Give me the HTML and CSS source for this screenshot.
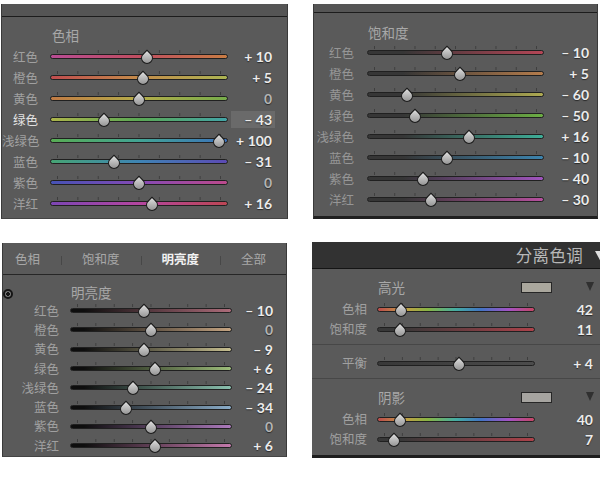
FILE: index.html
```html
<!DOCTYPE html>
<html lang="zh">
<head>
<meta charset="utf-8">
<title>HSL</title>
<link rel="stylesheet" href="styles.css">
</head>
<body>
<div class="page">

  <section class="panel p1">
    <div class="strip"></div>
    <div class="body">
      <div class="title">色相</div>
      <div class="rows">
        <div class="row"><span class="lab">红色</span><div class="track h-red"><b class="knob" style="--p:.55"></b></div><span class="val">+ 10</span></div>
        <div class="row"><span class="lab">橙色</span><div class="track h-orange"><b class="knob" style="--p:.525"></b></div><span class="val">+ 5</span></div>
        <div class="row"><span class="lab">黄色</span><div class="track h-yellow"><b class="knob" style="--p:.5"></b></div><span class="val zero">0</span></div>
        <div class="row active"><span class="lab">绿色</span><div class="track h-green"><b class="knob" style="--p:.285"></b></div><span class="val">– 43</span></div>
        <div class="row"><span class="lab">浅绿色</span><div class="track h-aqua"><b class="knob" style="--p:.985"></b></div><span class="val">+ 100</span></div>
        <div class="row"><span class="lab">蓝色</span><div class="track h-blue"><b class="knob" style="--p:.345"></b></div><span class="val">– 31</span></div>
        <div class="row"><span class="lab">紫色</span><div class="track h-purple"><b class="knob" style="--p:.5"></b></div><span class="val zero">0</span></div>
        <div class="row"><span class="lab">洋红</span><div class="track h-magenta"><b class="knob" style="--p:.58"></b></div><span class="val">+ 16</span></div>
      </div>
    </div>
  </section>

  <section class="panel p2">
    <div class="strip"></div>
    <div class="body">
      <div class="title">饱和度</div>
      <div class="rows">
        <div class="row"><span class="lab">红色</span><div class="track s-red"><b class="knob" style="--p:.45"></b></div><span class="val">– 10</span></div>
        <div class="row"><span class="lab">橙色</span><div class="track s-orange"><b class="knob" style="--p:.525"></b></div><span class="val">+ 5</span></div>
        <div class="row"><span class="lab">黄色</span><div class="track s-yellow"><b class="knob" style="--p:.2"></b></div><span class="val">– 60</span></div>
        <div class="row"><span class="lab">绿色</span><div class="track s-green"><b class="knob" style="--p:.25"></b></div><span class="val">– 50</span></div>
        <div class="row"><span class="lab">浅绿色</span><div class="track s-aqua"><b class="knob" style="--p:.58"></b></div><span class="val">+ 16</span></div>
        <div class="row"><span class="lab">蓝色</span><div class="track s-blue"><b class="knob" style="--p:.45"></b></div><span class="val">– 10</span></div>
        <div class="row"><span class="lab">紫色</span><div class="track s-purple"><b class="knob" style="--p:.3"></b></div><span class="val">– 40</span></div>
        <div class="row"><span class="lab">洋红</span><div class="track s-magenta"><b class="knob" style="--p:.35"></b></div><span class="val">– 30</span></div>
      </div>
    </div>
  </section>

  <section class="panel p3">
    <div class="tabs">
      <span class="tab">色相</span><i class="sep"></i>
      <span class="tab">饱和度</span><i class="sep"></i>
      <span class="tab on">明亮度</span><i class="sep"></i>
      <span class="tab">全部</span>
    </div>
    <div class="body">
      <div class="title-row"><span class="target"></span><span class="title">明亮度</span></div>
      <div class="rows">
        <div class="row"><span class="lab">红色</span><div class="track l-red"><b class="knob" style="--p:.45"></b></div><span class="val">– 10</span></div>
        <div class="row"><span class="lab">橙色</span><div class="track l-orange"><b class="knob" style="--p:.5"></b></div><span class="val zero">0</span></div>
        <div class="row"><span class="lab">黄色</span><div class="track l-yellow"><b class="knob" style="--p:.455"></b></div><span class="val">– 9</span></div>
        <div class="row"><span class="lab">绿色</span><div class="track l-green"><b class="knob" style="--p:.53"></b></div><span class="val">+ 6</span></div>
        <div class="row"><span class="lab">浅绿色</span><div class="track l-aqua"><b class="knob" style="--p:.38"></b></div><span class="val">– 24</span></div>
        <div class="row"><span class="lab">蓝色</span><div class="track l-blue"><b class="knob" style="--p:.33"></b></div><span class="val">– 34</span></div>
        <div class="row"><span class="lab">紫色</span><div class="track l-purple"><b class="knob" style="--p:.5"></b></div><span class="val zero">0</span></div>
        <div class="row"><span class="lab">洋红</span><div class="track l-magenta"><b class="knob" style="--p:.53"></b></div><span class="val">+ 6</span></div>
      </div>
    </div>
  </section>

  <section class="panel p4">
    <div class="head"><span class="head-title">分离色调</span><i class="head-tri"></i></div>
    <div class="sec">
      <div class="sec-head"><span class="title">高光</span><span class="swatch sw-hi"></span><i class="mini-tri"></i></div>
      <div class="row"><span class="lab">色相</span><div class="track t-hue"><b class="knob" style="--p:.117"></b></div><span class="val">42</span></div>
      <div class="row"><span class="lab">饱和度</span><div class="track t-sat"><b class="knob" style="--p:.11"></b></div><span class="val">11</span></div>
    </div>
    <div class="sec bal">
      <div class="row"><span class="lab">平衡</span><div class="track t-bal"><b class="knob" style="--p:.52"></b></div><span class="val">+ 4</span></div>
    </div>
    <div class="sec last">
      <div class="sec-head"><span class="title">阴影</span><span class="swatch sw-lo"></span><i class="mini-tri"></i></div>
      <div class="row"><span class="lab">色相</span><div class="track t-hue"><b class="knob" style="--p:.111"></b></div><span class="val">40</span></div>
      <div class="row"><span class="lab">饱和度</span><div class="track t-sat"><b class="knob" style="--p:.07"></b></div><span class="val">7</span></div>
    </div>
  </section>

</div>
</body>
</html>
```
FILE: styles.css
```css
html, body {
  margin: 0;
  background: #ffffff;
}
body {
  font-family: "Noto Sans CJK SC", "Noto Sans", sans-serif;
  width: 600px;
  height: 490px;
  overflow: hidden;
}
.page {
  display: grid;
  grid-template-columns: 287px 288px;
  grid-template-rows: 215px 216px;
  column-gap: 24px;
  row-gap: 23px;
  padding: 4px 0 0 1px;
}

.panel {
  background: #5a5a5a;
  box-sizing: border-box;
  overflow: hidden;
  position: relative;
}
.strip {
  background: #555555;
  border-bottom: 1px solid #1c1c1c;
}

/* ---------- shared rows ---------- */
.title {
  color: #a8a8a8;
  font-size: 13.5px;
  line-height: 20px;
}
.row {
  display: grid;
  align-items: center;
  height: 21px;
}
.lab {
  text-align: right;
  color: #a0a0a0;
  font-size: 12.5px;
  line-height: 16px;
  white-space: nowrap;
}
.val {
  text-align: right;
  font-family: Lato, "Noto Sans", sans-serif;
  font-weight: 700;
  font-size: 14px;
  color: #ececec;
  text-shadow: 0 1px 1px rgba(0,0,0,.55);
  white-space: nowrap;
  padding-right: 3px;
  height: 17px;
  line-height: 17px;
}
.val.zero {
  color: #b4b4b4;
}

.track {
  position: relative;
  height: 5px;
  box-sizing: border-box;
  border: 1px solid #202020;
  border-radius: 3px;
}
.track::before {
  content: "";
  position: absolute;
  left: 6px;
  right: 6px;
  top: -5px;
  height: 3px;
  background: linear-gradient(90deg, #3e3e3e 0 1px, transparent 1px) 0 0 / calc((100% - 1px) / 8) 100% repeat-x;
}
.knob {
  position: absolute;
  box-sizing: border-box;
  width: 12px;
  height: 12px;
  left: calc(6px + (100% - 12px) * var(--p));
  top: -3px;
  margin-left: -6px;
  transform: rotate(45deg);
  border-radius: 0 50% 50% 50%;
  border: 1px solid #1a1a1a;
  background: linear-gradient(135deg, #dedede, #8a8a8a);
}

/* ---------- panel 1 : hue ---------- */
.p1 {
  border-left: 1px solid #3a3a3a;
  border-right: 1px solid #3a3a3a;
  border-bottom: 1px solid #444;
}
.p1 .strip { height: 12px; }
.p1 .body { padding-top: 8px; }
.p1 .title { padding-left: 50px; margin-bottom: 1px; }
.p1 .row { grid-template-columns: 36px 12px 178px 47px; }
.p1 .row .track { grid-column: 3; }
.p1 .row .val { grid-column: 4; margin-left: 3px; }
.p1 .row.active .lab { color: #e2e2e2; }
.p1 .row.active .val { background: #6a6a6a; }

.h-red     { background: linear-gradient(90deg, #b84c94, #c04e60 50%, #c87c44); }
.h-orange  { background: linear-gradient(90deg, #c04c4e, #c48c4a 50%, #acb452); }
.h-yellow  { background: linear-gradient(90deg, #c07a44, #b4ac4a 50%, #76ac4a); }
.h-green   { background: linear-gradient(90deg, #acb44a, #5aa854 50%, #42a4a6); }
.h-aqua    { background: linear-gradient(90deg, #58ac54, #42a494 50%, #3c72bc); }
.h-blue    { background: linear-gradient(90deg, #46a474, #3e84b4 50%, #5c4ab4); }
.h-purple  { background: linear-gradient(90deg, #4652b4, #844ab4 50%, #bc4a8c); }
.h-magenta { background: linear-gradient(90deg, #7c46b4, #b446a0 50%, #bc4654); }

/* ---------- panel 2 : saturation ---------- */
.p2 {
  margin-left: 1px;
  margin-right: 2px;
  height: 215px;
  border-left: 1px solid #3a3a3a;
  border-right: 1px solid #3a3a3a;
  border-bottom: 3px solid #202020;
}
.p2 .strip { height: 8px; }
.p2 .body { padding-top: 9px; }
.p2 .title { padding-left: 54px; }
.p2 .lab { color: #969696; }
.p2 .row { grid-template-columns: 40px 13px 177px 48px; }
.p2 .row .track { grid-column: 3; }
.p2 .row .val { grid-column: 4; }

.s-red     { background: linear-gradient(90deg, #363636 20%, #b44656); }
.s-orange  { background: linear-gradient(90deg, #363636 20%, #b47c4c); }
.s-yellow  { background: linear-gradient(90deg, #363636 20%, #aeaa52); }
.s-green   { background: linear-gradient(90deg, #363636 20%, #6cae44); }
.s-aqua    { background: linear-gradient(90deg, #363636 20%, #3eae98); }
.s-blue    { background: linear-gradient(90deg, #363636 20%, #3c84ae); }
.s-purple  { background: linear-gradient(90deg, #363636 20%, #a054be); }
.s-magenta { background: linear-gradient(90deg, #363636 20%, #b6509e); }

/* ---------- panel 3 : luminance ---------- */
.p3 {
  margin: 1px 1px 0 1px;
  height: 214px;
  border-left: 1px solid #3a3a3a;
  border-right: 1px solid #3a3a3a;
  border-bottom: 1px solid #444;
}
.tabs {
  display: flex;
  align-items: center;
  height: 31px;
  padding-left: 12px;
  border-bottom: 1px solid #262626;
  font-size: 12.5px;
  color: #a8a8a8;
}
.tab { line-height: 16px; }
.tab.on { color: #f2f2f2; font-weight: 700; }
.sep {
  width: 1px;
  height: 9px;
  margin: 3px 20px 0 21px;
  background: #474747;
}
.p3 .body { padding-top: 9px; }
.title-row {
  display: flex;
  align-items: center;
  height: 17px;
}
.target {
  box-sizing: border-box;
  width: 10px;
  height: 10px;
  margin-top: 2px;
  border-radius: 50%;
  border: 2px solid #151515;
  background: radial-gradient(circle, #151515 0 1.6px, #7a7a7a 2px);
}
.p3 .title { margin-left: 58px; line-height: 17px; }
.p3 .row { height: 19.3px; grid-template-columns: 56px 11px 162px 44px; }
.p3 .row .track { grid-column: 3; }
.p3 .row .val { grid-column: 4; }

.l-red     { background: linear-gradient(90deg, #0e0e0e 8%, #ac6c7a); }
.l-orange  { background: linear-gradient(90deg, #0e0e0e 8%, #c4a482); }
.l-yellow  { background: linear-gradient(90deg, #0e0e0e 8%, #c6be90); }
.l-green   { background: linear-gradient(90deg, #0e0e0e 8%, #9cbc7a); }
.l-aqua    { background: linear-gradient(90deg, #0e0e0e 8%, #8ac0ae); }
.l-blue    { background: linear-gradient(90deg, #0e0e0e 8%, #8aacc8); }
.l-purple  { background: linear-gradient(90deg, #0e0e0e 8%, #ac7abc); }
.l-magenta { background: linear-gradient(90deg, #0e0e0e 8%, #c47aac); }

/* ---------- panel 4 : split toning ---------- */
.p4 {
  height: 216px;
  border-bottom: 3px solid #1e1e1e;
}
.head {
  height: 26px;
  background: #323232;
  border-bottom: 1px solid #141414;
  display: flex;
  align-items: center;
  justify-content: flex-end;
}
.head-title {
  color: #b8b8b8;
  font-size: 16.5px;
  line-height: 22px;
  letter-spacing: 0.3px;
}
.head-tri {
  width: 0;
  height: 0;
  margin-left: 12px;
  margin-right: -7px;
  margin-top: 2px;
  border-left: 6px solid transparent;
  border-right: 6px solid transparent;
  border-top: 11px solid #e0e0e0;
}
.sec {
  padding: 8px 0 5px;
  border-bottom: 1px solid #474747;
}
.sec.bal { padding: 8px 0 5px; }
.sec.last { border-bottom: 0; padding-bottom: 6px; }
.sec-head {
  display: flex;
  align-items: center;
  height: 20px;
  margin-bottom: 2px;
}
.p4 .title { margin-left: 66px; }
.swatch {
  box-sizing: border-box;
  width: 31px;
  height: 11px;
  margin-left: auto;
  border: 1px solid #262626;
}
.sw-hi { background: #aaa79d; }
.sw-lo { background: #a6a4a0; }
.mini-tri {
  width: 0;
  height: 0;
  margin: -2px 6px 0 34px;
  border-left: 4.5px solid transparent;
  border-right: 4.5px solid transparent;
  border-top: 9px solid #303030;
}
.p4 .row { height: 20px; grid-template-columns: 55px 10px 158px 1fr; }
.p4 .row .track { grid-column: 3; }
.p4 .row .val { grid-column: 4; padding-right: 7px; }
.p4 .lab { color: #a0a0a0; }

.t-hue { background: linear-gradient(90deg, #bc4c4c 0%, #c49e44 17%, #88b444 32%, #44aca2 50%, #4274c4 66%, #a452c4 84%, #c44664 100%); }
.t-sat { background: linear-gradient(90deg, #383838 15%, #ac424a); }
.t-bal { background: linear-gradient(90deg, #383838, #4c4c4c); }
```
